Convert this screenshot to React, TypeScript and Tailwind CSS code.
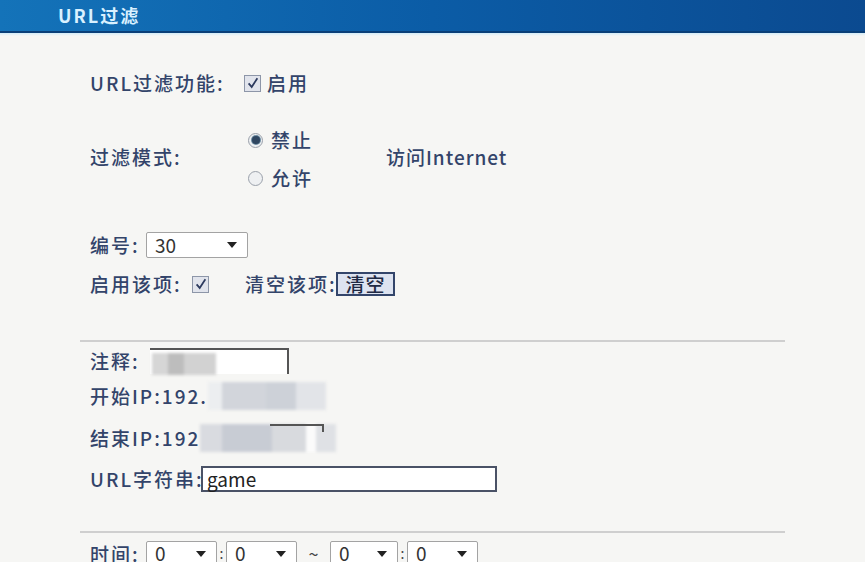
import React from "react";

const textCls =
  "shrink-0 whitespace-nowrap text-[19px] font-medium leading-[24px] tracking-[2px] text-[#33446a]";

function Checkbox() {
  return (
    <span className="inline-flex h-[17px] w-[17px] shrink-0 items-center justify-center border border-[#8d96a8] bg-[#e1e4ec]">
      <svg viewBox="0 0 16 16" className="h-[14px] w-[14px]">
        <path d="M3 8.5 L6.5 12.5 L13 2.5" fill="none" stroke="#2c3a5e" strokeWidth="2" />
      </svg>
    </span>
  );
}

function Radio({ checked }: { checked?: boolean }) {
  return (
    <span className="inline-flex h-[15px] w-[15px] shrink-0 items-center justify-center rounded-full border border-[#9aa0aa] bg-[#eef0f2]">
      {checked && <span className="h-[8px] w-[8px] rounded-full bg-[#2f4660] ring-1 ring-[#6a8aa0]" />}
    </span>
  );
}

function Select({ value, width }: { value: string; width: string }) {
  return (
    <div
      className={`${width} flex h-[26px] shrink-0 items-center justify-between rounded-[2px] border border-[#a3a3a3] bg-white pl-[8px] pr-[10px] text-[19px] text-[#333]`}
    >
      <span>{value}</span>
      <svg viewBox="0 0 10 6" className="h-[6px] w-[10px]">
        <path d="M0 0 H10 L5 6 Z" fill="#222" />
      </svg>
    </div>
  );
}

function Blocks({ items }: { items: [string, string][] }) {
  return (
    <div className="flex h-full blur-[1.5px]">
      {items.map(([w, c], i) => (
        <div key={i} className={`${w} ${c} h-full`} />
      ))}
    </div>
  );
}

export default function App() {
  return (
    <div
      className="h-[562px] w-[865px] overflow-hidden bg-[#f6f6f4]"
      style={{ fontFamily: '"Noto Sans CJK SC", "Noto Sans", sans-serif' }}
    >
      {/* Title bar */}
      <div className="flex h-[31px] items-center bg-gradient-to-r from-[#1473b9] via-[#0b5ca6] to-[#0b4a90] pl-[58px]">
        <span className="text-[18px] font-bold tracking-[2px] text-[#d9f1ff]">URL过滤</span>
      </div>
      <div className="h-[2px] bg-[#0a3f78]" />
      <div className="h-[3px] bg-gradient-to-b from-[#d3ecf8] to-[#f6f6f4]" />

      <div className="ml-[80px] w-[705px]">
        {/* URL filter enable */}
        <div className="mt-[35px] flex items-center pl-[10px]">
          <span className={`${textCls} w-[154px]`}>URL过滤功能:</span>
          <Checkbox />
          <span className={`${textCls} ml-[6px]`}>启用</span>
        </div>

        {/* Filter mode */}
        <div className="mt-[33px] flex items-center pl-[10px]">
          <span className={`${textCls} -mt-[4px] w-[158px]`}>过滤模式:</span>
          <div className="flex w-[138px] shrink-0 flex-col gap-[14px]">
            <div className="flex items-center gap-[8px]">
              <Radio checked />
              <span className={textCls}>禁止</span>
            </div>
            <div className="flex items-center gap-[8px]">
              <Radio />
              <span className={textCls}>允许</span>
            </div>
          </div>
          <span className="-mt-[4px] whitespace-nowrap text-[19px] font-medium leading-[24px] tracking-[1px] text-[#33446a]">
            访问Internet
          </span>
        </div>

        {/* Number */}
        <div className="mt-[42px] flex items-center pl-[10px]">
          <span className={`${textCls} w-[56px]`}>编号:</span>
          <Select value="30" width="w-[102px]" />
        </div>

        {/* Enable / clear */}
        <div className="mt-[14px] flex items-center pl-[10px]">
          <span className={`${textCls} w-[102px]`}>启用该项:</span>
          <Checkbox />
          <span className={`${textCls} ml-[36px] w-[91px]`}>清空该项:</span>
          <button className="h-[24px] w-[59px] shrink-0 border-2 border-[#33456a] bg-[#dde3f0] text-[19px] font-medium leading-[20px] tracking-[1px] text-[#1f2a44]">
            清空
          </button>
        </div>

        <div className="mt-[44px] h-[2px] bg-[#cfcfcf]" />

        {/* Comment */}
        <div className="mt-[5px] flex h-[28px] items-center pl-[10px]">
          <span className={`${textCls} w-[60px]`}>注释:</span>
          <div className="relative h-[26px] w-[139px] shrink-0 border-r-2 border-t-2 border-[#555] bg-white">
            <div className="absolute left-[2px] top-[3px] h-[22px] w-[64px]">
              <Blocks
                items={[
                  ["w-[16px]", "bg-[#d6d6d6]"],
                  ["w-[16px]", "bg-[#bdbdbd]"],
                  ["w-[32px]", "bg-[#d2d2d2]"],
                ]}
              />
            </div>
          </div>
        </div>

        {/* Start IP */}
        <div className="mt-[6px] flex h-[30px] items-center pl-[10px]">
          <span className={textCls}>开始IP:192.</span>
          <div className="h-[28px] w-[118px] shrink-0">
            <Blocks
              items={[
                ["w-[14px]", "bg-[#eceef0]"],
                ["w-[44px]", "bg-[#d2d5db]"],
                ["w-[30px]", "bg-[#cdd1d8]"],
                ["w-[30px]", "bg-[#e2e4e8]"],
              ]}
            />
          </div>
        </div>

        {/* End IP */}
        <div className="mt-[12px] flex h-[30px] items-center pl-[10px]">
          <span className={textCls}>结束IP:192</span>
          <div className="relative h-[28px] w-[136px] shrink-0">
            <Blocks
              items={[
                ["w-[22px]", "bg-[#d9dbe0]"],
                ["w-[50px]", "bg-[#c8ccd4]"],
                ["w-[34px]", "bg-[#d8dade]"],
                ["w-[10px]", "bg-[#fbfbfb]"],
                ["w-[20px]", "bg-[#dfe1e5]"],
              ]}
            />
            <div className="absolute left-[70px] top-0 h-[8px] w-[54px] border-r-2 border-t-2 border-[#555]" />
          </div>
        </div>

        {/* URL string */}
        <div className="mt-[13px] flex items-center pl-[10px]">
          <span className={`${textCls} w-[111px]`}>URL字符串:</span>
          <div className="flex h-[26px] w-[296px] shrink-0 items-center border-2 border-[#4a5266] bg-white pl-[4px] text-[19px] text-[#222]">
            game
          </div>
        </div>

        <div className="mt-[39px] h-[2px] bg-[#cfcfcf]" />

        {/* Time */}
        <div className="mt-[7px] flex items-center pl-[10px]">
          <span className={`${textCls} w-[56px]`}>时间:</span>
          <Select value="0" width="w-[71px]" />
          <span className="w-[9px] shrink-0 text-center text-[14px] text-[#444]">:</span>
          <Select value="0" width="w-[71px]" />
          <span className="w-[33px] shrink-0 text-center text-[18px] text-[#444]">~</span>
          <Select value="0" width="w-[68px]" />
          <span className="w-[9px] shrink-0 text-center text-[14px] text-[#444]">:</span>
          <Select value="0" width="w-[71px]" />
        </div>
      </div>
    </div>
  );
}
